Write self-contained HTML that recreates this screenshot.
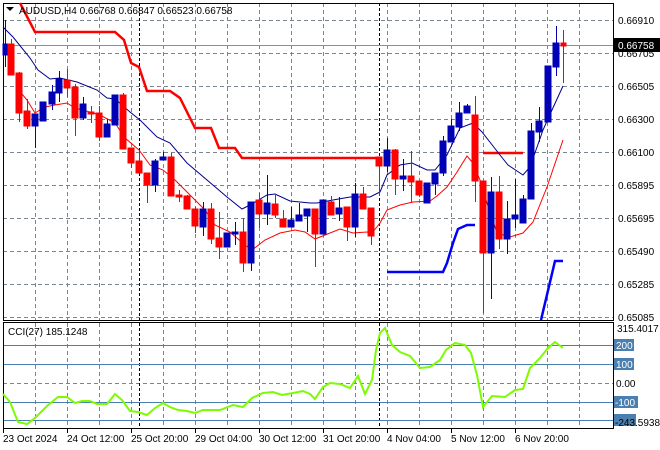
<!DOCTYPE html>
<html><head><meta charset="utf-8"><style>
html,body{margin:0;padding:0;background:#fff;}
svg{display:block;font-family:"Liberation Sans",sans-serif;font-size:10px;}
</style></head><body>
<svg width="660" height="450" viewBox="0 0 660 450" xmlns="http://www.w3.org/2000/svg">
<rect width="660" height="450" fill="#fff"/>
<!-- grid main -->
<g stroke="#7a8590" stroke-width="1" stroke-dasharray="4,3" fill="none">
<path d="M3 20.5H613M3 53.5H613M3 86.5H613M3 119.5H613M3 152.5H613M3 185.5H613M3 218.5H613M3 251.5H613M3 284.5H613M3 317.5H613"/>
<path d="M35.5 3V320M67.5 3V320M99.5 3V320M131.5 3V320M163.5 3V320M195.5 3V320M227.5 3V320M259.5 3V320M291.5 3V320M323.5 3V320M355.5 3V320M387.5 3V320M419.5 3V320M451.5 3V320M483.5 3V320M515.5 3V320M547.5 3V320M579.5 3V320"/>
<path d="M35.5 323V428M67.5 323V428M99.5 323V428M131.5 323V428M163.5 323V428M195.5 323V428M227.5 323V428M259.5 323V428M291.5 323V428M323.5 323V428M355.5 323V428M387.5 323V428M419.5 323V428M451.5 323V428M483.5 323V428M515.5 323V428M547.5 323V428M579.5 323V428"/>
<path d="M3 383.5H613"/>
</g>
<g stroke="#000" stroke-dasharray="3,2">
<path d="M139.5 3V428M379.5 3V428"/>
</g>
<!-- CCI levels -->
<g stroke="#4a7fb0" stroke-width="1">
<path d="M3 345.5H613M3 364.5H613M3 402.5H613M3 420.5H613"/>
</g>
<!-- current price line -->
<path d="M3 45.5H613" stroke="#8a9098"/>
<!-- frame -->
<g stroke="#000" fill="none">
<rect x="3.5" y="3.5" width="610" height="317"/>
<rect x="3.5" y="322.5" width="610" height="106"/>
</g>
<!-- red thick stop -->
<path d="M20 3L35 32H115L124 40L131 63L139 67L147 91H170L180 98L195 128H211L219 148H235L242 158H379" stroke="#f00" stroke-width="2.5" fill="none"/>
<path d="M483 153H523" stroke="#f00" stroke-width="2.5"/>
<!-- blue thick stop -->
<path d="M387 272H443L447 263L453 243L458 229L467 225H475" stroke="#00f" stroke-width="2.5" fill="none"/>
<path d="M541 320L555 261H563" stroke="#00f" stroke-width="2.5" fill="none"/>
<!-- thin red -->
<polyline fill="none" stroke="#f00" stroke-width="1" points="17,88 27,100 35,113 45,107 55,105 67,103 75,108 90,112 100,115 115,123 125,138 139,150 150,165 163,170 175,180 190,195 205,210 215,225 230,232 245,245 252,250 265,240 280,233 295,230 305,232 315,239 330,233 340,229 353,233 367,232 372,233 380,223 387,210 400,205 413,202 430,201 437,196 447,187 457,172 467,156 473,163 480,180 487,203 497,233 510,237 523,233 533,222 547,187 563,140"/>
<!-- thin blue -->
<polyline fill="none" stroke="#00008b" stroke-width="1" points="3,27 13,37 30,58 38,70 50,79 60,78 77,82 97,90 107,98 115,99 130,112 140,120 157,137 170,143 187,163 207,180 227,197 242,209 250,205 267,195 275,194 290,201 310,203 317,203 333,200 350,197 370,197 380,192 387,175 400,165 412,163 427,170 435,170 447,155 460,128 473,123 482,132 500,155 508,165 523,175 530,167 543,130 552,110 563,86"/>
<!-- candles -->
<g id="c" stroke-width="1">
<g stroke="#0000b4" fill="#0000b4">
<path d="M5.5 20V67"/><rect x="3" y="44" width="5" height="11"/>
<path d="M35.5 114V148"/><rect x="32" y="114" width="6" height="12"/>
<path d="M43.5 102V121"/><rect x="40" y="102" width="6" height="19"/>
<path d="M52.5 85V110"/><rect x="49" y="92" width="6" height="12"/>
<path d="M59.5 71V102"/><rect x="56" y="79" width="6" height="14"/>
<path d="M83.5 97V120"/><rect x="80" y="104" width="6" height="14"/>
<path d="M107.5 119V137"/><rect x="104" y="124" width="6" height="13"/>
<path d="M115.5 95V125"/><rect x="112" y="95" width="6" height="30"/>
<path d="M155.5 159V192"/><rect x="152" y="161" width="6" height="24"/>
<path d="M163.5 152V160"/><rect x="160" y="157" width="6" height="3"/>
<path d="M203.5 202V236"/><rect x="200" y="209" width="6" height="18"/>
<path d="M227.5 233V247"/><rect x="224" y="233" width="6" height="14"/>
<path d="M235.5 222V245"/><rect x="232" y="232" width="6" height="2"/>
<path d="M251.5 202V271"/><rect x="248" y="202" width="6" height="61"/>
<path d="M267.5 175V225"/><rect x="264" y="203" width="6" height="11"/>
<path d="M291.5 207V227"/><rect x="288" y="220" width="6" height="7"/>
<path d="M299.5 203V221"/><rect x="296" y="215" width="6" height="6"/>
<path d="M307.5 209V232"/><rect x="304" y="209" width="6" height="7"/>
<path d="M323.5 200V234"/><rect x="320" y="200" width="6" height="34"/>
<path d="M339.5 197V221"/><rect x="336" y="208" width="6" height="6"/>
<path d="M355.5 183V237"/><rect x="352" y="194" width="6" height="33"/>
<path d="M387.5 138V172"/><rect x="384" y="150" width="6" height="16"/>
<path d="M403.5 159V191"/><rect x="400" y="176" width="6" height="3"/>
<path d="M427.5 183V203"/><rect x="424" y="183" width="6" height="20"/>
<path d="M435.5 173V195"/><rect x="432" y="173" width="6" height="11"/>
<path d="M443.5 136V176"/><rect x="440" y="141" width="6" height="32"/>
<path d="M451.5 119V142"/><rect x="448" y="126" width="6" height="16"/>
<path d="M459.5 102V131"/><rect x="456" y="113" width="6" height="14"/>
<path d="M467.5 104V113"/><rect x="464" y="106" width="6" height="7"/>
<path d="M491.5 177V299"/><rect x="488" y="192" width="6" height="61"/>
<path d="M507.5 201V254"/><rect x="504" y="219" width="6" height="20"/>
<path d="M515.5 179V228"/><rect x="512" y="215" width="6" height="4"/>
<path d="M523.5 195V223"/><rect x="520" y="199" width="6" height="24"/>
<path d="M531.5 123V199"/><rect x="528" y="131" width="6" height="68"/>
<path d="M539.5 107V142"/><rect x="536" y="121" width="6" height="11"/>
<path d="M548.5 66V122"/><rect x="545" y="66" width="6" height="56"/>
<path d="M556.5 26V76"/><rect x="553" y="43" width="6" height="24"/>
</g>
<g stroke="#f00" fill="#f00">
<path d="M11.5 39V75"/><rect x="8" y="44" width="6" height="31"/>
<path d="M19.5 72V122"/><rect x="16" y="73" width="6" height="40"/>
<path d="M27.5 99V129"/><rect x="24" y="111" width="6" height="15"/>
<path d="M67.5 69V97"/><rect x="64" y="80" width="6" height="8"/>
<path d="M75.5 84V136"/><rect x="72" y="87" width="6" height="31"/>
<path d="M91.5 106V123"/><rect x="88" y="112" width="6" height="2"/>
<path d="M99.5 106V141"/><rect x="96" y="113" width="6" height="24"/>
<path d="M123.5 93V149"/><rect x="120" y="95" width="6" height="54"/>
<path d="M131.5 148V168"/><rect x="128" y="148" width="6" height="15"/>
<path d="M139.5 150V173"/><rect x="136" y="161" width="6" height="12"/>
<path d="M147.5 173V203"/><rect x="144" y="173" width="6" height="12"/>
<path d="M171.5 153V196"/><rect x="168" y="157" width="6" height="39"/>
<path d="M179.5 190V202"/><rect x="176" y="195" width="6" height="2"/>
<path d="M187.5 195V209"/><rect x="184" y="196" width="6" height="13"/>
<path d="M195.5 207V233"/><rect x="192" y="209" width="6" height="17"/>
<path d="M211.5 203V244"/><rect x="208" y="209" width="6" height="30"/>
<path d="M219.5 212V259"/><rect x="216" y="238" width="6" height="9"/>
<path d="M243.5 218V272"/><rect x="240" y="232" width="6" height="31"/>
<path d="M259.5 193V228"/><rect x="256" y="200" width="6" height="14"/>
<path d="M275.5 194V218"/><rect x="272" y="204" width="6" height="11"/>
<path d="M283.5 210V227"/><rect x="280" y="219" width="6" height="8"/>
<path d="M315.5 209V267"/><rect x="312" y="209" width="6" height="25"/>
<path d="M331.5 196V215"/><rect x="328" y="202" width="6" height="13"/>
<path d="M347.5 207V241"/><rect x="344" y="207" width="6" height="20"/>
<path d="M363.5 187V209"/><rect x="360" y="194" width="6" height="15"/>
<path d="M371.5 208V245"/><rect x="368" y="208" width="6" height="28"/>
<path d="M379.5 157V196"/><rect x="376" y="157" width="6" height="9"/>
<path d="M395.5 149V195"/><rect x="392" y="150" width="6" height="29"/>
<path d="M411.5 151V202"/><rect x="408" y="176" width="6" height="6"/>
<path d="M419.5 181V197"/><rect x="416" y="181" width="6" height="14"/>
<path d="M475.5 96V202"/><rect x="472" y="115" width="6" height="66"/>
<path d="M483.5 181V313"/><rect x="480" y="181" width="6" height="72"/>
<path d="M499.5 176V249"/><rect x="496" y="192" width="6" height="47"/>
<path d="M563.5 30V83"/><rect x="561" y="43" width="5" height="3"/>
</g>
</g>
<!-- CCI line -->
<polyline fill="none" stroke="#7cfc00" stroke-width="2" points="3,394 10,402 18,422 27,424 35,418 47,406 58,397 67,397 75,403 82,401 90,401 97,404 107,404 115,394 122,400 130,411 138,412 147,415 155,408 163,403 170,407 178,410 187,411 195,413 203,410 220,410 233,405 243,407 252,398 263,393 273,392 282,395 293,393 303,391 310,394 315,399 323,387 330,383 340,384 350,388 358,376 365,394 372,380 376,350 380,333 385,328 392,345 400,352 410,356 420,368 430,367 440,360 446,350 455,343 465,345 471,353 477,375 483,407 492,396 505,397 515,390 523,389 530,368 540,358 548,348 555,342 563,348"/>
<!-- top label -->
<path d="M6 7H14L10 11Z" fill="#000"/>
<text x="19" y="14" fill="#000">AUDUSD,H4  0.66768 0.66847 0.66523 0.66758</text>
<text x="8" y="335" fill="#000">CCI(27) 185.1248</text>
<!-- price axis -->
<g fill="#000">
<text x="618" y="24">0.66910</text>
<text x="618" y="57">0.66705</text>
<text x="618" y="90">0.66505</text>
<text x="618" y="123">0.66300</text>
<text x="618" y="156">0.66100</text>
<text x="618" y="189">0.65895</text>
<text x="618" y="222">0.65695</text>
<text x="618" y="255">0.65490</text>
<text x="618" y="288">0.65285</text>
<text x="618" y="321">0.65085</text>
</g>
<rect x="614" y="38" width="46" height="14" fill="#000"/>
<text x="618" y="49" fill="#fff">0.66758</text>
<text x="617" y="332" fill="#000">315.4017</text>
<rect x="614" y="339" width="20" height="12" fill="#4a7fb0"/><text x="616" y="349" fill="#fff">200</text>
<rect x="614" y="358" width="20" height="12" fill="#4a7fb0"/><text x="616" y="368" fill="#fff">100</text>
<text x="616" y="387" fill="#000">0.00</text>
<rect x="614" y="396" width="24" height="12" fill="#4a7fb0"/><text x="615" y="406" fill="#fff">-100</text>
<rect x="614" y="414" width="22" height="12" fill="#4a7fb0"/>
<text x="615" y="426" fill="#000">-243.5938</text>
<!-- time axis -->
<g stroke="#000"><path d="M3.5 428V433M67.5 428V433M131.5 428V433M195.5 428V433M259.5 428V433M323.5 428V433M387.5 428V433M451.5 428V433M515.5 428V433"/></g>
<g fill="#000">
<text x="3" y="442">23 Oct 2024</text>
<text x="67" y="442">24 Oct 12:00</text>
<text x="131" y="442">25 Oct 20:00</text>
<text x="195" y="442">29 Oct 04:00</text>
<text x="259" y="442">30 Oct 12:00</text>
<text x="323" y="442">31 Oct 20:00</text>
<text x="387" y="442">4 Nov 04:00</text>
<text x="451" y="442">5 Nov 12:00</text>
<text x="515" y="442">6 Nov 20:00</text>
</g>
</svg>
</body></html>
